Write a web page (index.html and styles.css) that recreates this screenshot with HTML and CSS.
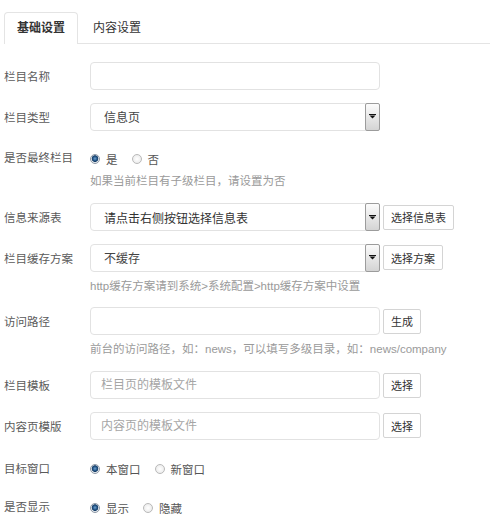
FILE: index.html
```html
<!DOCTYPE html>
<html lang="zh-CN">
<head>
<meta charset="utf-8">
<title>栏目设置</title>
<link rel="stylesheet" href="styles.css">
</head>
<body>
<div class="page">
  <ul class="tabs">
    <li class="tab active">基础设置</li>
    <li class="tab">内容设置</li>
  </ul>
  <form class="form">
    <div class="row">
      <label class="lbl">栏目名称</label>
      <div class="ctl"><input class="input" type="text"></div>
    </div>
    <div class="row">
      <label class="lbl">栏目类型</label>
      <div class="ctl"><div class="select"><span class="val">信息页</span><span class="arrow"><svg width="7" height="5" viewBox="0 0 7 5"><rect x="0" y="0" width="7" height="1" fill="#111"/><path d="M0.5 1.5H6.5L3.5 4.5Z" fill="#111"/></svg></span></div></div>
    </div>
    <div class="row">
      <label class="lbl">是否最终栏目</label>
      <div class="col">
        <div class="radios"><span class="radio on"></span><span class="rtxt">是</span><span class="radio"></span><span class="rtxt">否</span></div>
        <div class="help">如果当前栏目有子级栏目，请设置为否</div>
      </div>
    </div>
    <div class="row">
      <label class="lbl">信息来源表</label>
      <div class="ctl"><div class="select"><span class="val dark">请点击右侧按钮选择信息表</span><span class="arrow"><svg width="7" height="5" viewBox="0 0 7 5"><rect x="0" y="0" width="7" height="1" fill="#111"/><path d="M0.5 1.5H6.5L3.5 4.5Z" fill="#111"/></svg></span></div><button type="button" class="btn">选择信息表</button></div>
    </div>
    <div class="row">
      <label class="lbl">栏目缓存方案</label>
      <div class="col">
        <div class="ctl"><div class="select"><span class="val">不缓存</span><span class="arrow"><svg width="7" height="5" viewBox="0 0 7 5"><rect x="0" y="0" width="7" height="1" fill="#111"/><path d="M0.5 1.5H6.5L3.5 4.5Z" fill="#111"/></svg></span></div><button type="button" class="btn">选择方案</button></div>
        <div class="help after-ctl">http缓存方案请到系统&gt;系统配置&gt;http缓存方案中设置</div>
      </div>
    </div>
    <div class="row">
      <label class="lbl">访问路径</label>
      <div class="col">
        <div class="ctl"><input class="input" type="text"><button type="button" class="btn">生成</button></div>
        <div class="help after-ctl">前台的访问路径，如：news，可以填写多级目录，如：news/company</div>
      </div>
    </div>
    <div class="row">
      <label class="lbl">栏目模板</label>
      <div class="ctl"><input class="input" type="text" placeholder="栏目页的模板文件"><button type="button" class="btn">选择</button></div>
    </div>
    <div class="row">
      <label class="lbl">内容页模版</label>
      <div class="ctl"><input class="input" type="text" placeholder="内容页的模板文件"><button type="button" class="btn">选择</button></div>
    </div>
    <div class="row rrow">
      <label class="lbl">目标窗口</label>
      <div class="radios"><span class="radio on"></span><span class="rtxt">本窗口</span><span class="radio"></span><span class="rtxt">新窗口</span></div>
    </div>
    <div class="row rrow">
      <label class="lbl">是否显示</label>
      <div class="radios"><span class="radio on"></span><span class="rtxt">显示</span><span class="radio"></span><span class="rtxt">隐藏</span></div>
    </div>
  </form>
</div>
</body>
</html>
```
FILE: styles.css
```css
html, body {
  margin: 0;
  background: #fff;
}
body {
  font-family: "Liberation Sans", "Noto Sans CJK SC", sans-serif;
  font-size: 11.5px;
  color: #555;
}
.page {
  padding: 12px 0 0 4px;
}
.tabs {
  display: flex;
  list-style: none;
  margin: 0;
  padding: 0;
  height: 31px;
  border-bottom: 1px solid #e4e4e4;
}
.tab {
  box-sizing: border-box;
  height: 32px;
  padding: 0 12px;
  line-height: 30px;
  border: 1px solid transparent;
  border-bottom: none;
  border-radius: 4px 4px 0 0;
  color: #333;
  font-size: 12px;
}
.tab.active {
  border-color: #e4e4e4;
  background: #fff;
  font-weight: bold;
}
.tab + .tab {
  margin-left: 2px;
}
.form {
  margin-top: 18px;
}
.row {
  display: flex;
  align-items: flex-start;
  margin-bottom: 12.7px;
}
.lbl {
  width: 86px;
  flex: none;
  line-height: 26px;
  padding-top: 2px;
  color: #5a5a5a;
}
.rrow .lbl {
  line-height: 20px;
  padding-top: 6px;
}
.col {
  display: flex;
  flex-direction: column;
}
.ctl {
  display: flex;
  align-items: center;
}
.input {
  box-sizing: border-box;
  width: 290px;
  height: 28px;
  margin: 0;
  padding: 0 10px;
  border: 1px solid #e2e2e2;
  border-radius: 4px;
  font: inherit;
  font-size: 12px;
  color: #333;
  background: #fff;
  outline: none;
}
.input::placeholder {
  color: #a5a5a5;
}
.select {
  box-sizing: border-box;
  width: 290px;
  height: 28px;
  display: flex;
  align-items: center;
  padding-left: 13px;
  border: 1px solid #e2e2e2;
  border-radius: 4px;
  background: #fff;
  font-size: 12px;
}
.val {
  color: #444;
}
.val.dark {
  color: #333;
}
.arrow {
  margin-left: auto;
  box-sizing: border-box;
  width: 15px;
  height: 28px;
  margin-right: -1px;
  display: flex;
  align-items: center;
  justify-content: center;
  border: 1px solid #9c9c9c;
  border-radius: 2px;
  background: linear-gradient(#fbfbfb, #d4d4d4);
}
.arrow svg {
  display: block;
}
.btn {
  box-sizing: border-box;
  height: 25px;
  margin: 0 0 0 3px;
  padding: 0 7px;
  border: 1px solid #d4d4d4;
  border-radius: 2px;
  background: #fff;
  font: inherit;
  font-size: 11px;
  color: #333;
}
.help {
  margin-top: 4px;
  line-height: 18px;
  color: #9a9a9a;
}
.help.after-ctl {
  margin-top: 5px;
}
.radios {
  display: flex;
  align-items: center;
  padding-top: 7px;
  height: 18px;
}
.rrow .radios {
  padding-top: 7px;
  height: 19px;
}
.radio {
  box-sizing: border-box;
  width: 10px;
  height: 10px;
  border-radius: 50%;
  border: 1px solid #b9b9b9;
  background: radial-gradient(circle at 50% 50%, #ffffff 0, #e6e6e6 100%);
}
.radio.on {
  border-color: #8e99a6;
  background: radial-gradient(circle at 50% 45%, #6da2d2 0, #1f4f80 2.2px, #173f68 3px, #dfe4ea 3.6px, #f4f4f4 100%);
}
.rtxt {
  margin: 0 14px 0 6px;
  color: #555;
}
```
